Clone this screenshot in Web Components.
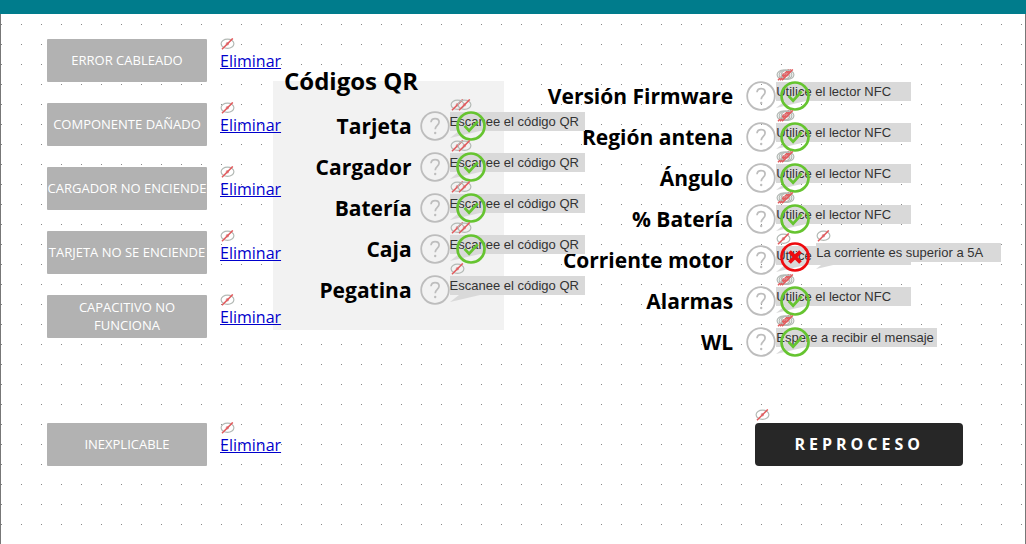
<!DOCTYPE html>
<html lang="es">
<head>
<meta charset="utf-8">
<meta name="viewport" content="width=device-width, initial-scale=1">
<title>Reproceso</title>
<style>
    body {
        margin: 0;
        font-family: "Open Sans", "Noto Sans", sans-serif;
        color: #000;
    }
</style>
</head>
<body>
<rework-board></rework-board>

<script>
/**
 * Crossed-out eye that marks a hidden widget.
 * @customElement hidden-mark
 *
 * @attr {number} count - How many marks are stacked side by side
 */
class HiddenMark extends HTMLElement {
    constructor() {
        super();
        this.attachShadow({ mode: 'open' });
    }

    connectedCallback() {
        const count = parseInt(this.getAttribute('count')) || 1;

        this.shadowRoot.innerHTML = `
            <style>
                :host {
                    display: flex;
                    height: 12px;
                }
                svg {
                    flex: none;
                    width: 15px;
                    height: 12px;
                }
                svg + svg {
                    margin-left: var(--mark-overlap, -13px);
                }
            </style>
            ${Array.from({ length: count }, () => `
                <svg viewBox="0 0 15 12" fill="none" aria-hidden="true">
                    <ellipse cx="7.500" cy="5.800" rx="6.400" ry="4.600" stroke="#b4bab6" stroke-width="1.200"/>
                    <circle cx="7.400" cy="5.800" r="1.700" fill="#d9a0a2"/>
                    <path d="M2 11.300 12.800.4" stroke="#e25a5c" stroke-width="1.500"/>
                </svg>
            `).join('')}
        `;
    }
}

/**
 * Round status icon.
 * @customElement status-icon
 *
 * @attr {string} kind - help, ok or error
 */
class StatusIcon extends HTMLElement {
    static shapes = {
        help: `
            <circle cx="15" cy="15" r="13.800" stroke="#bdbdbd" stroke-width="1.800"/>
            <path d="M11 11.300c.2-2.400 1.800-3.700 4.100-3.700 2.300 0 4 1.400 4 3.500 0 3.200-3.900 3.400-3.900 7.200" stroke="#bdbdbd" stroke-width="1.700"/>
            <circle cx="15.200" cy="22" r="1.200" fill="#bdbdbd"/>`,
        ok: `
            <circle cx="15" cy="15" r="13.500" stroke="#66c430" stroke-width="2.700"/>
            <path d="m8.500 14.800 4.600 4.900 8.600-9.300" stroke="#66c430" stroke-width="2.700"/>`,
        error: `
            <circle cx="15" cy="15" r="13.500" stroke="#ee0b0f" stroke-width="2.700"/>
            <path d="m9.500 9.500 11 11m0-11-11 11" stroke="#ee0b0f" stroke-width="3.800"/>`
    };

    constructor() {
        super();
        this.attachShadow({ mode: 'open' });
    }

    connectedCallback() {
        const kind = this.getAttribute('kind') || 'help';

        this.shadowRoot.innerHTML = `
            <style>
                :host {
                    display: block;
                    flex: none;
                    width: 30px;
                    height: 30px;
                }
                svg {
                    display: block;
                }
            </style>
            <svg width="30" height="30" viewBox="0 0 30 30" fill="none" aria-hidden="true">
                ${StatusIcon.shapes[kind]}
            </svg>
        `;
    }
}

/**
 * Speech bubble with a short instruction and its hidden marks on top.
 * @customElement hint-bubble
 *
 * @attr {number} marks - Number of hidden marks
 */
class HintBubble extends HTMLElement {
    constructor() {
        super();
        this.attachShadow({ mode: 'open' });
    }

    connectedCallback() {
        this.shadowRoot.innerHTML = `
            <style>
                :host {
                    display: block;
                    width: var(--hint-width, 135px);
                }
                .text {
                    background: #d9d9d9;
                    color: #333;
                    font: 13px/19px "Liberation Sans", Arial, sans-serif;
                    height: 19px;
                    white-space: nowrap;
                }
                .tail {
                    display: block;
                    width: 30px;
                    height: 7px;
                }
                hidden-mark {
                    padding-bottom: 1px;
                }
            </style>
            <hidden-mark count="${this.getAttribute('marks') || 1}"></hidden-mark>
            <div class="text"><slot></slot></div>
            <svg class="tail" viewBox="0 0 30 7" aria-hidden="true"><path d="M9 0h21L0 7Z" fill="#d9d9d9"/></svg>
        `;
    }
}

/**
 * One check of the board: label, help icon, hint and result.
 * @customElement check-row
 *
 * @attr {string} label - Name of the check
 * @attr {string} hint - Instruction shown in the bubble
 * @attr {number} marks - Number of hidden marks over the bubble
 * @attr {string} result - ok, error or empty while pending
 * @attr {string} message - Error message, shown in a second bubble
 */
class CheckRow extends HTMLElement {
    constructor() {
        super();
        this.attachShadow({ mode: 'open' });
    }

    connectedCallback() {
        const result = this.getAttribute('result');
        const message = this.getAttribute('message');

        this.shadowRoot.innerHTML = `
            <style>
                :host {
                    display: flex;
                    align-items: center;
                    gap: var(--row-gap, 8px);
                    height: 41px;
                }
                .label {
                    flex: none;
                    box-sizing: border-box;
                    width: var(--label-width);
                    font-size: 21px;
                    font-weight: 700;
                    line-height: 30px;
                    text-align: right;
                    white-space: nowrap;
                }
                .status {
                    position: relative;
                }
                /* the bubbles and the result float over the neighbouring rows */
                .hint, .result, .message {
                    position: absolute;
                    z-index: 2;
                }
                .hint {
                    left: 30px;
                    top: -12px;
                }
                .result {
                    left: var(--result-left, 36px);
                    top: 0;
                }
                .result[kind="error"] {
                    top: -3px;
                }
                .message {
                    --hint-width: 185px;
                    left: 70px;
                    top: -15px;
                }
            </style>
            <span class="label">${this.getAttribute('label')}</span>
            <div class="status">
                <status-icon kind="help"></status-icon>
                <hint-bubble class="hint" marks="${this.getAttribute('marks')}">${this.getAttribute('hint')}</hint-bubble>
                ${message ? `<hint-bubble class="message">${message}</hint-bubble>` : ''}
                ${result ? `<status-icon class="result" kind="${result}"></status-icon>` : ''}
            </div>
        `;
    }
}

/**
 * Failure reason with its delete link.
 * @customElement failure-reason
 */
class FailureReason extends HTMLElement {
    constructor() {
        super();
        this.attachShadow({ mode: 'open' });
    }

    connectedCallback() {
        this.shadowRoot.innerHTML = `
            <style>
                :host {
                    display: flex;
                    gap: 13px;
                    height: 43px;
                }
                button {
                    flex: none;
                    width: 160px;
                    padding: 0 0 2px;
                    border: 0;
                    border-radius: 1px;
                    background: #b2b2b2;
                    color: #fff;
                    font: 13px/18px "Open Sans", "Noto Sans", sans-serif;
                    cursor: pointer;
                }
                div {
                    margin-top: -1px;
                }
                a {
                    display: block;
                    color: #00c;
                    font-size: 16px;
                    line-height: 22px;
                }
            </style>
            <button type="button"><slot></slot></button>
            <div>
                <hidden-mark></hidden-mark>
                <a href="#">Eliminar</a>
            </div>
        `;
    }
}

/**
 * The whole board.
 * @customElement rework-board
 */
class ReworkBoard extends HTMLElement {
    constructor() {
        super();
        this.attachShadow({ mode: 'open' });
    }

    connectedCallback() {
        const nfc = 'Utilice el lector NFC';
        const qr = 'Escanee el código QR';

        this.shadowRoot.innerHTML = `
            <style>
                :host {
                    display: flex;
                    flex-direction: column;
                    min-height: 100vh;
                    overflow: hidden;
                }
                header {
                    height: 14px;
                    background: #007c8c;
                }
                main {
                    flex: 1;
                    display: grid;
                    grid-template-columns: 226px 231fr 521fr;
                    align-items: start;
                    padding-left: 46px;
                    border: solid #777;
                    border-width: 0 1px;
                    /* one dot every 20px */
                    background:
                        linear-gradient(#fff 19px, transparent 19px) 0 -9px / 20px 20px,
                        linear-gradient(90deg, #888 1px, #fff 1px) 0 -9px / 20px 20px;
                }
                .reasons {
                    display: grid;
                    gap: 21px;
                    padding-top: 25px;
                    position: relative;
                    z-index: 1;
                }
                .other {
                    margin-top: 64px;
                }
                .codes {
                    --label-width: 60%;
                    --mark-overlap: -8px;
                    margin-top: 67px;
                    padding-bottom: 20px;
                    background: #f2f2f2;
                }
                h2 {
                    margin: -17px 0 7px 11px;
                    font-size: 24px;
                    line-height: 34px;
                }
                .readings {
                    --label-width: 44%;
                    --row-gap: 13px;
                    --result-left: 34px;
                    padding-top: 61px;
                }
                .wide {
                    --hint-width: 161px;
                }
                .rework {
                    margin: 47px 0 0 calc(44% + 22px);
                }
                .rework button {
                    display: block;
                    width: 208px;
                    height: 43px;
                    margin-top: 2px;
                    padding: 0 0 2px;
                    border: 0;
                    border-radius: 4px;
                    background: #272727;
                    color: #fff;
                    font: 700 16px/22px "Open Sans", "Noto Sans", sans-serif;
                    letter-spacing: 4px;
                    cursor: pointer;
                }
            </style>
            <header></header>
            <main>
                <section class="reasons">
                    <failure-reason>ERROR CABLEADO</failure-reason>
                    <failure-reason>COMPONENTE DAÑADO</failure-reason>
                    <failure-reason>CARGADOR NO ENCIENDE</failure-reason>
                    <failure-reason>TARJETA NO SE ENCIENDE</failure-reason>
                    <failure-reason>CAPACITIVO NO FUNCIONA</failure-reason>
                    <failure-reason class="other">INEXPLICABLE</failure-reason>
                </section>
                <section class="codes">
                    <h2>Códigos QR</h2>
                    <check-row label="Tarjeta" hint="${qr}" marks="2" result="ok"></check-row>
                    <check-row label="Cargador" hint="${qr}" marks="2" result="ok"></check-row>
                    <check-row label="Batería" hint="${qr}" marks="2" result="ok"></check-row>
                    <check-row label="Caja" hint="${qr}" marks="2" result="ok"></check-row>
                    <check-row label="Pegatina" hint="${qr}" marks="1"></check-row>
                </section>
                <section class="readings">
                    <check-row label="Versión Firmware" hint="${nfc}" marks="3" result="ok"></check-row>
                    <check-row label="Región antena" hint="${nfc}" marks="3" result="ok"></check-row>
                    <check-row label="Ángulo" hint="${nfc}" marks="3" result="ok"></check-row>
                    <check-row label="% Batería" hint="${nfc}" marks="3" result="ok"></check-row>
                    <check-row label="Corriente motor" hint="Utilice" marks="1" result="error" message="La corriente es superior a 5A"></check-row>
                    <check-row label="Alarmas" hint="${nfc}" marks="3" result="ok"></check-row>
                    <check-row class="wide" label="WL" hint="Espere a recibir el mensaje" marks="3" result="ok"></check-row>
                    <div class="rework">
                        <hidden-mark></hidden-mark>
                        <button type="button">REPROCESO</button>
                    </div>
                </section>
            </main>
        `;
    }
}

customElements.define('hidden-mark', HiddenMark);
customElements.define('status-icon', StatusIcon);
customElements.define('hint-bubble', HintBubble);
customElements.define('check-row', CheckRow);
customElements.define('failure-reason', FailureReason);
customElements.define('rework-board', ReworkBoard);
</script>
</body>
</html>
